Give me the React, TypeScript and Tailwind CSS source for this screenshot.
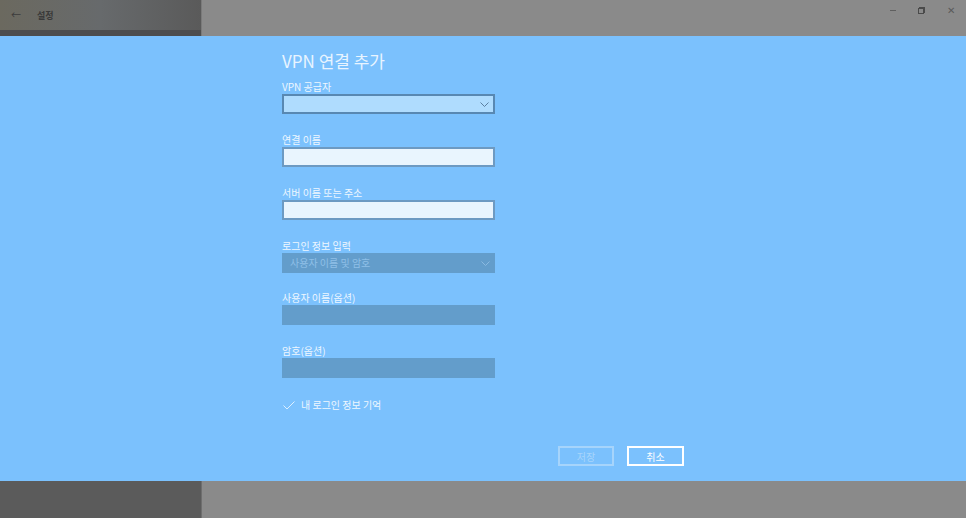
import React from "react";

const font = { fontFamily: '"Noto Sans CJK KR", "Noto Sans", sans-serif' };

function Chevron({ color }: { color: string }) {
  return (
    <svg width="9" height="5" viewBox="0 0 9 5" fill="none">
      <path d="M0.5 0.5 L4.5 4.5 L8.5 0.5" stroke={color} strokeWidth="1" />
    </svg>
  );
}

function Label({ children }: { children: React.ReactNode }) {
  return (
    <div className="h-[15px] text-[10px] leading-[15px] text-[#eef7ff]">{children}</div>
  );
}

export default function App() {
  return (
    <div className="w-[966px] h-[518px] overflow-hidden flex flex-col" style={font}>
      {/* top bar */}
      <div className="h-[36px] flex">
        <div className="w-[201px] flex flex-col">
          <div className="h-[30px] flex items-center bg-[linear-gradient(90deg,#6b695f_0%,#676a6c_50%,#5a5a5a_100%)]">
            <span className="ml-[11px] text-[10px] text-[#3c3c3c] leading-none">←</span>
            <span className="ml-[16px] text-[9px] font-bold text-[#3a3a3a] leading-none">설정</span>
          </div>
          <div className="h-[6px] bg-[#4d4d4d]" />
        </div>
        <div className="w-[1px] bg-[#7a7a7a]" />
        <div className="flex-1 bg-[#8a8a8a] flex justify-end items-start">
          <div className="flex items-center h-[20px] mr-[11px]">
            <div className="w-[6px] h-[1px] bg-[#5f5f5f] mr-[22px]" />
            <div className="relative w-[7px] h-[7px] mr-[22px]">
              <div className="absolute left-0 bottom-0 w-[6px] h-[6px] border border-[#4a4a4a]" />
              <div className="absolute right-0 top-0 w-[6px] h-[6px] border-t border-r border-[#4a4a4a]" />
            </div>
            <span className="text-[10px] text-[#5a5a5a] leading-none">✕</span>
          </div>
        </div>
      </div>

      {/* blue dialog */}
      <div className="h-[445px] bg-[#7bc1fd] pl-[282px] flex flex-col">
        <div className="mt-[12px] h-[26px] text-[17px] leading-[26px] text-[#e8f4ff]">VPN 연결 추가</div>
        <div className="mt-[5px]">
          <Label>VPN 공급자</Label>
          <div className="w-[213px] h-[20px] bg-[#afdcfe] border-2 border-[#5888b2] flex items-center justify-end pr-[4px]">
            <Chevron color="#5b7fa0" />
          </div>
        </div>
        <div className="mt-[18px]">
          <Label>연결 이름</Label>
          <div className="w-[213px] h-[20px] bg-[#e9f5fe] border-2 border-[#6d9ac2]" />
        </div>
        <div className="mt-[18px]">
          <Label>서버 이름 또는 주소</Label>
          <div className="w-[213px] h-[20px] bg-[#e9f5fe] border-2 border-[#6d9ac2]" />
        </div>
        <div className="mt-[18px]">
          <Label>로그인 정보 입력</Label>
          <div className="w-[213px] h-[20px] bg-[#639dcb] flex items-center justify-between pl-[8px] pr-[5px]">
            <span className="text-[10px] text-[#8fc0e8] leading-none">사용자 이름 및 암호</span>
            <Chevron color="#8ab9e0" />
          </div>
        </div>
        <div className="mt-[17px]">
          <Label>사용자 이름(옵션)</Label>
          <div className="w-[213px] h-[20px] bg-[#639dcb]" />
        </div>
        <div className="mt-[18px]">
          <Label>암호(옵션)</Label>
          <div className="w-[213px] h-[20px] bg-[#639dcb]" />
        </div>
        <div className="mt-[20px] flex items-center h-[14px]">
          <svg width="12" height="9" viewBox="0 0 12 9" fill="none" className="ml-[1px]">
            <path d="M0.5 4.5 L4 8 L11.5 0.5" stroke="#dcefff" strokeWidth="1" />
          </svg>
          <span className="ml-[6px] text-[10px] text-[#eef7ff] leading-none">내 로그인 정보 기억</span>
        </div>
        <div className="mt-[34px] flex ml-[276px] gap-[13px]">
          <div className="w-[56px] h-[20px] border-2 border-[#a6d4fb] flex items-center justify-center text-[10px] text-[#a8d5fb]">
            저장
          </div>
          <div className="w-[57px] h-[20px] border-2 border-[#ffffff] flex items-center justify-center text-[10px] text-[#ffffff]">
            취소
          </div>
        </div>
      </div>

      {/* bottom */}
      <div className="flex-1 flex">
        <div className="w-[201px] bg-[#5b5b5b]" />
        <div className="w-[1px] bg-[#6e6e6e]" />
        <div className="flex-1 bg-[#8a8a8a]" />
      </div>
    </div>
  );
}
